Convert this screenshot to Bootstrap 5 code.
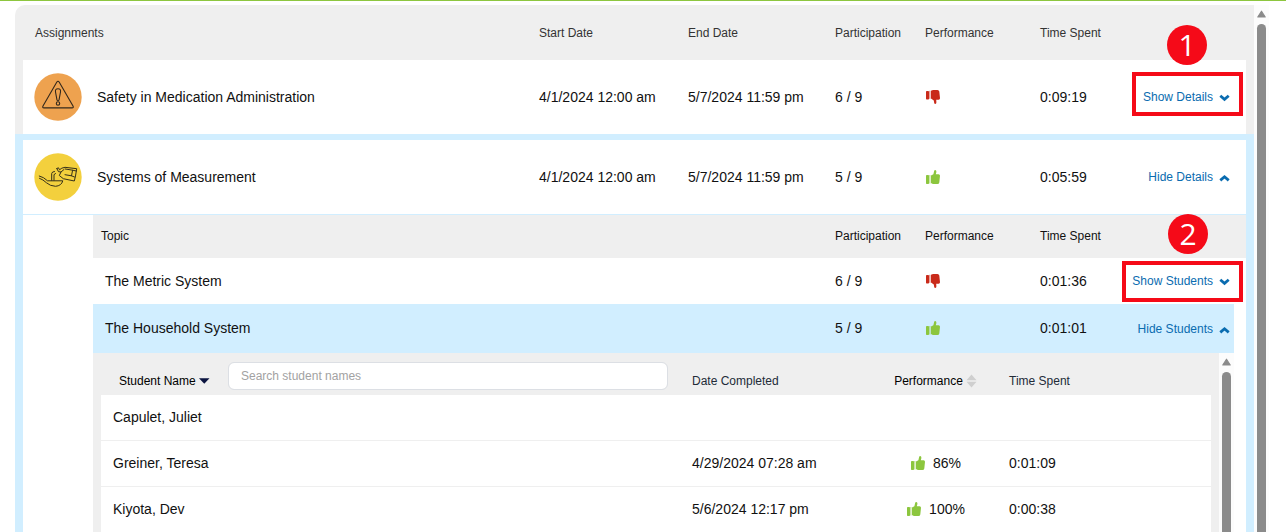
<!DOCTYPE html>
<html lang="en">
<head>
<meta charset="utf-8">
<meta name="viewport" content="width=device-width, initial-scale=1">
<title>Assignments report</title>
<link href="https://cdn.jsdelivr.net/npm/bootstrap@5.3.0/dist/css/bootstrap.min.css" rel="stylesheet">
<style>
  body { font-family: "Liberation Sans", Arial, sans-serif; font-size: 14px; line-height: 18px; color: #111; border-top: 1px solid #8dc63f; }
  .report { padding: 4px 17px 0 15px; }
  .panel { background: #efefef; border-top-left-radius: 10px; min-width: 0; }
  .grid { width: 100%; table-layout: fixed; border-collapse: separate; border-spacing: 0; }
  .grid th { font-size: 12px; font-weight: 400; }
  .grid th, .grid td { padding: 0; vertical-align: middle; white-space: nowrap; }
  .c-start { width: 149px; } .c-end { width: 147px; } .c-part { width: 90px; }
  .c-perf { width: 115px; } .c-time { width: 80px; } .c-act { width: 126px; }
  .head-main th { height: 55px; color: #333; }
  .grid .first { padding-left: 12px; }
  .row-main td, .row-main th { height: 74px; background: #fff; }
  .grid tbody th { font-size: 14px; }
  .expanded { border: 8px solid #d1eeff; border-top-width: 6px; border-bottom: 0; background: #fff; }
  .topics { border-top: 1px solid #d1eeff; padding-left: 70px; }
  .grid .head-topic th { height: 43px; padding-bottom: 2px; background: #efefef; }
  .grid .head-topic .first { padding-left: 8px; }
  .row-topic > * { height: 46px; background: #fff; }
  .row-topic.active > * { height: 49px; background: #d1eeff; }
  .grid .row-topic.active > :not(.act) { padding-bottom: 2px; }
  .row-topic.active > td:last-child { border-right: 12px solid #fff; background-clip: padding-box; }
  .grid .act { padding-right: 16px; padding-bottom: 2px; text-align: right; position: relative; }
  .grid .row-topic.active .act { padding-right: 4px; padding-bottom: 0; }
  .toggle { border: 0; padding: 0; background: none; color: #0a6cb0; font-size: 12px; line-height: 18px; display: inline-flex; align-items: center; gap: 6px; }
  .toggle svg { margin-top: 2px; }
  .mark-box { position: absolute; right: 3px; border: 4px solid #f50a18; pointer-events: none; }
  .mark-box.a { top: 12px; width: 111px; height: 44px; }
  .mark-box.b { top: 3px; width: 121px; height: 41px; }
  .mark-dot { position: absolute; right: 39px; width: 40px; height: 40px; border-radius: 50%; background: #f50a18; color: #fff; font: 30px/40px "Open Sans", sans-serif; text-align: center; z-index: 2; }
  .mark-dot.a { top: -35px; } .mark-dot.b { top: -44px; right: 38px; }
  .students { margin-right: 12px; }
  .students-body { background: #efefef; padding: 0 8px; min-width: 0; }
  .head-student th { height: 42px; padding-bottom: 5px; vertical-align: bottom; color: #222b38; }
  .grid .head-student th { padding-bottom: 5px; }
  .grid .head-student .first { padding-left: 18px; padding-right: 24px; }
  .c-date { width: 170px; } .c-score { width: 147px; } .c-spent { width: 202px; }
  .row-student > * { height: 46px; background: #fff; border-bottom: 1px solid #efefef; }
  .grid .row-student > * { padding-bottom: 1px; }
  .sort { border: 0; padding: 0; background: none; color: #000; font-size: 12px; line-height: 18px; display: inline-flex; flex: none; align-items: center; gap: 3px; }
  .name-sort { width: 109px; }
  .search { height: 28px; font-size: 12px; line-height: 16px; padding: 0 12px; border: 1px solid #dcdfe4; border-radius: 6px; min-width: 0; }
  .search::placeholder { color: #a2a2a2; opacity: 1; }
  .scroller { width: 15px; background: #fcfcfc; padding: 5px 3px 0; }
  .scroller .thumb { background: #8b8b8b; border-radius: 5px 5px 0 0; margin-top: 6px; }
  .ico { display: block; flex: none; }
  .thumb-ico { margin-left: 1px; }
</style>
</head>
<body class="vh-100 overflow-hidden bg-white">
<svg class="d-none" aria-hidden="true">
  <symbol id="up" viewBox="0 0 14 14">
    <rect y="5" width="3" height="9" rx=".7"/><rect x="3" y="5" width="1.6" height="8.5" opacity=".45"/>
    <path d="M5 5.6 7.4 4.2 8.2.8Q8.5 0 9.3.1 10.6.4 10.4 2L9.800 4.2H12.6Q14 4.4 14 5.8L13.3 12.4Q13 14 11.5 14H7.3Q6.3 14 5 13Z"/>
  </symbol>
  <symbol id="down" viewBox="0 0 14 14">
    <rect y="1" width="3" height="8.5" rx=".7"/><rect x="3" y=".8" width="1.6" height="8" opacity=".45"/>
    <path d="M5 .8Q6.3 0 7.3 0H11.5Q13 0 13.3 1.6L14 8.3Q14 9.6 12.6 9.8H10.2L10.4 12.2Q10.4 13.8 9.3 14 8.4 14 8.2 13.1L7.8 10.5 5 8.4Z"/>
  </symbol>
  <symbol id="chev-down" viewBox="0 0 11 8"><path d="M1.300 1.800 5.500 5.400 9.700 1.800" fill="none" stroke="currentColor" stroke-width="2.800"/></symbol>
  <symbol id="chev-up" viewBox="0 0 11 8"><path d="M1.300 6.400 5.500 2.800 9.700 6.400" fill="none" stroke="currentColor" stroke-width="2.800"/></symbol>
  <symbol id="tri" viewBox="0 0 9 8"><path d="M4.500 1.200 8.200 7H.8Z" fill="#8b8b8b" stroke="#8b8b8b" stroke-width="1.200" stroke-linejoin="round"/></symbol>
</svg>

<main class="report d-flex h-100">
  <div class="panel flex-fill">
    <div class="mx-2">
      <table class="grid">
        <colgroup><col><col class="c-start"><col class="c-end"><col class="c-part"><col class="c-perf"><col class="c-time"><col class="c-act"></colgroup>
        <thead>
          <tr class="head-main"><th class="first" scope="col">Assignments</th><th scope="col">Start Date</th><th scope="col">End Date</th><th scope="col">Participation</th><th scope="col">Performance</th><th scope="col">Time Spent</th><td></td></tr>
        </thead>
        <tbody>
          <tr class="row-main">
            <th class="first" scope="row"><div class="d-flex align-items-center">
              <svg class="ico me-3" width="46" height="48" viewBox="1 0 46 48" overflow="visible" aria-hidden="true"><circle cx="24" cy="24" r="23.7" fill="#eea24f"/><g fill="none" stroke="#33281c" stroke-width="1.1"><path d="M22.7 9.2Q24 7.2 25.3 9.2L39 33Q39.9 34.9 38 34.9H10Q8.1 34.9 9 33Z"/><path d="M24 15.700Q27 15.700 26.500 19L25 27Q24 28.500 23 27L21.500 19Q21 15.700 24 15.700Z"/><circle cx="24" cy="30.500" r="1.700"/></g></svg>
              <span>Safety in Medication Administration</span></div></th>
            <td>4/1/2024 12:00 am</td><td>5/7/2024 11:59 pm</td><td>6 / 9</td>
            <td><svg class="ico thumb-ico" width="14" height="14" fill="#c92a1a" role="img" aria-label="Below target"><use href="#down"/></svg></td>
            <td>0:09:19</td>
            <td class="act"><button class="toggle" type="button">Show Details <svg width="11" height="8"><use href="#chev-down"/></svg></button><span class="mark-box a"></span><span class="mark-dot a">1</span></td>
          </tr>
        </tbody>
      </table>
    </div>

    <section class="expanded">
      <table class="grid">
        <colgroup><col><col class="c-start"><col class="c-end"><col class="c-part"><col class="c-perf"><col class="c-time"><col class="c-act"></colgroup>
        <tbody>
          <tr class="row-main">
            <th class="first" scope="row"><div class="d-flex align-items-center">
              <svg class="ico me-3" width="46" height="48" viewBox="1 0 46 48" overflow="visible" aria-hidden="true"><circle cx="24" cy="24" r="23.7" fill="#f3d03d"/><g fill="none" stroke="#35301a" stroke-width="1" stroke-linejoin="round" stroke-linecap="round"><path d="M5.300 23Q10 24.200 13.500 27.800H28.800Q27.500 32.800 21.500 33.300 16 33 12.500 29.800 9 26.500 5.500 25.300"/><path d="M17.700 27.300V20.500Q18 18.500 20.500 18.500M20 27.300V22Q20.200 20.800 21.500 20.500"/><path d="M22.800 15.500 24.500 14.800 25.500 16.800 27.800 15.200 31 14.300 42.700 15.700 41.500 23 40.300 28 29.300 25.700 25.300 22.500 27 19 24.500 18.700 22.800 15.500M27 19 30 16.500"/><path d="M31.300 16 38.600 17.200 37.500 22.800 31 21.700M38.600 17.200 42.300 18M37.500 22.800 40.500 24"/></g></svg>
              <span>Systems of Measurement</span></div></th>
            <td>4/1/2024 12:00 am</td><td>5/7/2024 11:59 pm</td><td>5 / 9</td>
            <td><svg class="ico thumb-ico" width="14" height="14" fill="#8cc63e" role="img" aria-label="On target"><use href="#up"/></svg></td>
            <td>0:05:59</td>
            <td class="act"><button class="toggle" type="button">Hide Details <svg width="11" height="8"><use href="#chev-up"/></svg></button></td>
          </tr>
        </tbody>
      </table>

      <div class="topics">
        <table class="grid">
          <colgroup><col><col class="c-part"><col class="c-perf"><col class="c-time"><col class="c-act"></colgroup>
          <thead>
            <tr class="head-topic"><th class="first" scope="col">Topic</th><th scope="col">Participation</th><th scope="col">Performance</th><th scope="col">Time Spent</th><th></th></tr>
          </thead>
          <tbody>
            <tr class="row-topic">
              <th class="first" scope="row">The Metric System</th><td>6 / 9</td>
              <td><svg class="ico thumb-ico" width="14" height="14" fill="#c92a1a" role="img" aria-label="Below target"><use href="#down"/></svg></td>
              <td>0:01:36</td>
              <td class="act"><button class="toggle" type="button">Show Students <svg width="11" height="8"><use href="#chev-down"/></svg></button><span class="mark-box b"></span><span class="mark-dot b">2</span></td>
            </tr>
            <tr class="row-topic active">
              <th class="first" scope="row">The Household System</th><td>5 / 9</td>
              <td><svg class="ico thumb-ico" width="14" height="14" fill="#8cc63e" role="img" aria-label="On target"><use href="#up"/></svg></td>
              <td>0:01:01</td>
              <td class="act"><button class="toggle" type="button">Hide Students <svg width="11" height="8"><use href="#chev-up"/></svg></button></td>
            </tr>
          </tbody>
        </table>

        <div class="students d-flex">
          <div class="students-body flex-fill">
            <table class="grid">
              <colgroup><col><col class="c-date"><col class="c-score"><col class="c-spent"></colgroup>
              <thead>
                <tr class="head-student">
                  <th class="first" scope="col"><div class="d-flex align-items-end">
                    <button class="sort name-sort" type="button">Student Name <svg width="11" height="6" aria-hidden="true"><path d="M0 .3H10.500L5.250 5.800Z" fill="#0b1440"/></svg></button>
                    <input class="search form-control flex-fill" type="text" placeholder="Search student names" aria-label="Search student names">
                  </div></th>
                  <th scope="col">Date Completed</th>
                  <th class="text-center" scope="col"><button class="sort" type="button">Performance <svg width="11" height="14" aria-hidden="true"><path d="M5.500.5 10.500 6.300H.5ZM.5 7.700H10.500L5.500 13.500Z" fill="#cfcfcf"/></svg></button></th>
                  <th scope="col">Time Spent</th>
                </tr>
              </thead>
              <tbody>
                <tr class="row-student"><th class="first" scope="row">Capulet, Juliet</th><td></td><td></td><td></td></tr>
                <tr class="row-student"><th class="first" scope="row">Greiner, Teresa</th><td>4/29/2024 07:28 am</td>
                  <td><div class="d-flex justify-content-center align-items-center gap-2"><svg class="ico thumb-ico" width="14" height="14" fill="#8cc63e" aria-hidden="true"><use href="#up"/></svg>86%</div></td><td>0:01:09</td></tr>
                <tr class="row-student"><th class="first" scope="row">Kiyota, Dev</th><td>5/6/2024 12:17 pm</td>
                  <td><div class="d-flex justify-content-center align-items-center gap-2"><svg class="ico thumb-ico" width="14" height="14" fill="#8cc63e" aria-hidden="true"><use href="#up"/></svg>100%</div></td><td>0:00:38</td></tr>
              </tbody>
            </table>
          </div>
          <div class="scroller d-flex flex-column" aria-hidden="true"><svg class="ico" width="9" height="8"><use href="#tri"/></svg><div class="thumb flex-fill"></div></div>
        </div>
      </div>
    </section>
  </div>
  <div class="scroller d-flex flex-column" aria-hidden="true"><svg class="ico" width="9" height="8"><use href="#tri"/></svg><div class="thumb flex-fill"></div></div>
</main>
<script src="https://cdn.jsdelivr.net/npm/bootstrap@5.3.0/dist/js/bootstrap.bundle.min.js"></script>
</body>
</html>
